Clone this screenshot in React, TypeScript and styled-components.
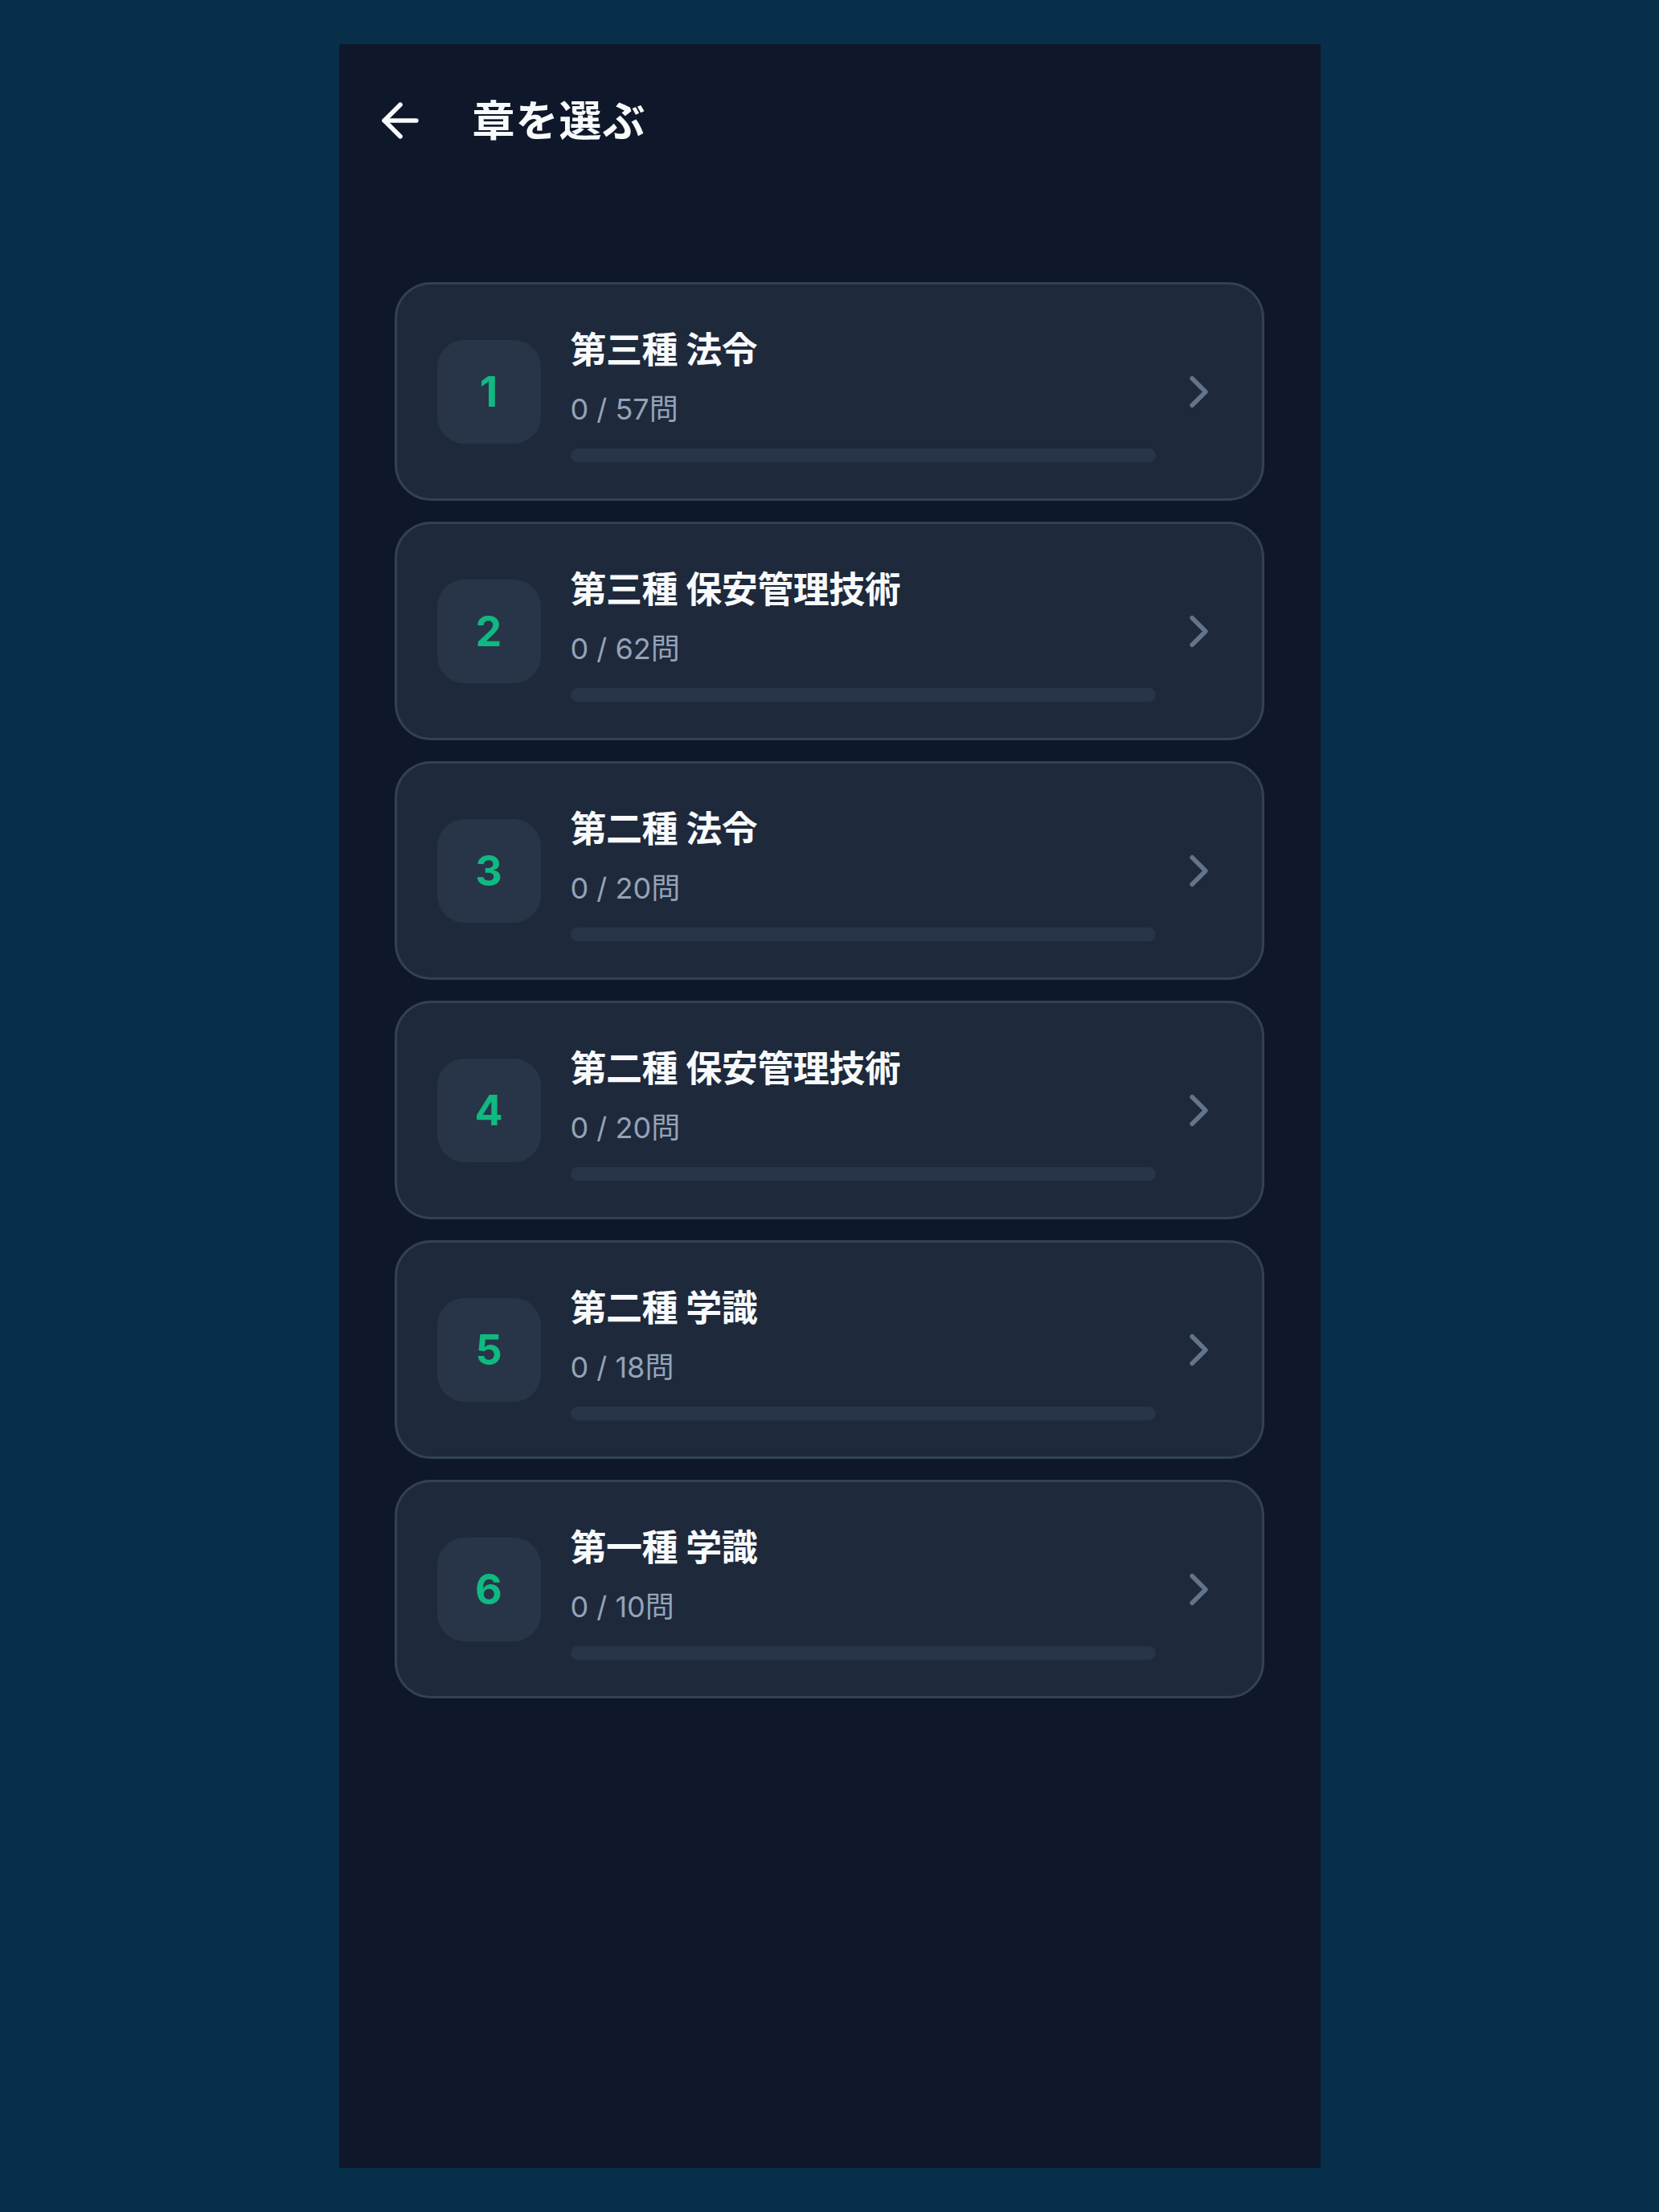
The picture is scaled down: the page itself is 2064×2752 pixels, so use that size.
import styled, { createGlobalStyle } from 'styled-components'

type Chapter = {
  no: number
  title: string
  done: number
  total: number
}

const chapters: Chapter[] = [
  { no: 1, title: '第三種 法令', done: 0, total: 57 },
  { no: 2, title: '第三種 保安管理技術', done: 0, total: 62 },
  { no: 3, title: '第二種 法令', done: 0, total: 20 },
  { no: 4, title: '第二種 保安管理技術', done: 0, total: 20 },
  { no: 5, title: '第二種 学識', done: 0, total: 18 },
  { no: 6, title: '第一種 学識', done: 0, total: 10 },
]

const ArrowLeft = () => (
  <svg width="68" height="68" viewBox="0 0 24 24" fill="none" stroke="currentColor" strokeWidth="2" strokeLinecap="round" strokeLinejoin="round">
    <path d="m12 19-7-7 7-7" />
    <path d="M19 12H5" />
  </svg>
)

const ChevronRight = () => (
  <svg width="67" height="67" viewBox="0 0 24 24" fill="none" stroke="currentColor" strokeWidth="2" strokeLinecap="round" strokeLinejoin="round">
    <path d="m9 18 6-6-6-6" />
  </svg>
)

const App = () => {
  return (
    <>
      <GlobalStyle />
      <Screen>
        <Header>
          <BackButton aria-label="戻る">
            <ArrowLeft />
          </BackButton>
          <PageTitle>章を選ぶ</PageTitle>
        </Header>
        <List>
          {chapters.map((c) => (
            <Card key={c.no}>
              <NumberBox>{c.no}</NumberBox>
              <Info>
                <ChapterTitle>{c.title}</ChapterTitle>
                <Count>
                  {c.done} / {c.total}問
                </Count>
                <Track>
                  <Fill style={{ width: `${(c.done / c.total) * 100}%` }} />
                </Track>
              </Info>
              <Chevron>
                <ChevronRight />
              </Chevron>
            </Card>
          ))}
        </List>
      </Screen>
    </>
  )
}

export default App

const GlobalStyle = createGlobalStyle`
  html, body {
    margin: 0;
    padding: 0;
    background: #082f49;
  }
  body {
    font-family: Inter, "Noto Sans CJK JP", sans-serif;
  }
  #root {
    min-height: 2752px;
    padding: 55px 0;
    box-sizing: border-box;
  }
`

const Screen = styled.div`
  width: 1221px;
  height: 2642px;
  margin: 0 auto;
  background: #0f172a;
  display: flex;
  flex-direction: column;
`

const Header = styled.header`
  height: 190px;
  display: flex;
  align-items: center;
  padding: 0 42px;
`

const BackButton = styled.button`
  background: none;
  border: none;
  padding: 0;
  color: #f8fafc;
  display: flex;
  align-items: center;
  cursor: pointer;
`

const PageTitle = styled.h1`
  margin: 0 0 6px 56px;
  font-size: 53px;
  font-weight: 700;
  color: #f8fafc;
  letter-spacing: 1px;
`

const List = styled.div`
  display: flex;
  flex-direction: column;
  gap: 26px;
  padding: 106px 70px 0 69px;
`

const Card = styled.div`
  height: 272px;
  box-sizing: border-box;
  display: flex;
  align-items: center;
  padding: 0 45px 0 50px;
  background: #1e293b;
  border: 3px solid #334155;
  border-radius: 45px;
`

const NumberBox = styled.div`
  width: 129px;
  height: 129px;
  flex-shrink: 0;
  display: flex;
  align-items: center;
  justify-content: center;
  border-radius: 34px;
  background: #283548;
  color: #10b981;
  font-size: 52px;
  font-weight: 700;
`

const Info = styled.div`
  flex: 1;
  margin: 8px 0 0 37px;
  display: flex;
  flex-direction: column;
`

const ChapterTitle = styled.div`
  font-size: 45px;
  line-height: 56px;
  font-weight: 700;
  color: #f8fafc;
  letter-spacing: -0.5px;
`

const Count = styled.div`
  margin-top: 23px;
  font-size: 36px;
  line-height: 44px;
  color: #94a3b8;
`

const Track = styled.div`
  margin-top: 27px;
  height: 17px;
  border-radius: 9px;
  background: #283548;
  overflow: hidden;
`

const Fill = styled.div`
  height: 100%;
  background: #10b981;
`

const Chevron = styled.div`
  margin-left: 20px;
  color: #64748b;
  display: flex;
`
